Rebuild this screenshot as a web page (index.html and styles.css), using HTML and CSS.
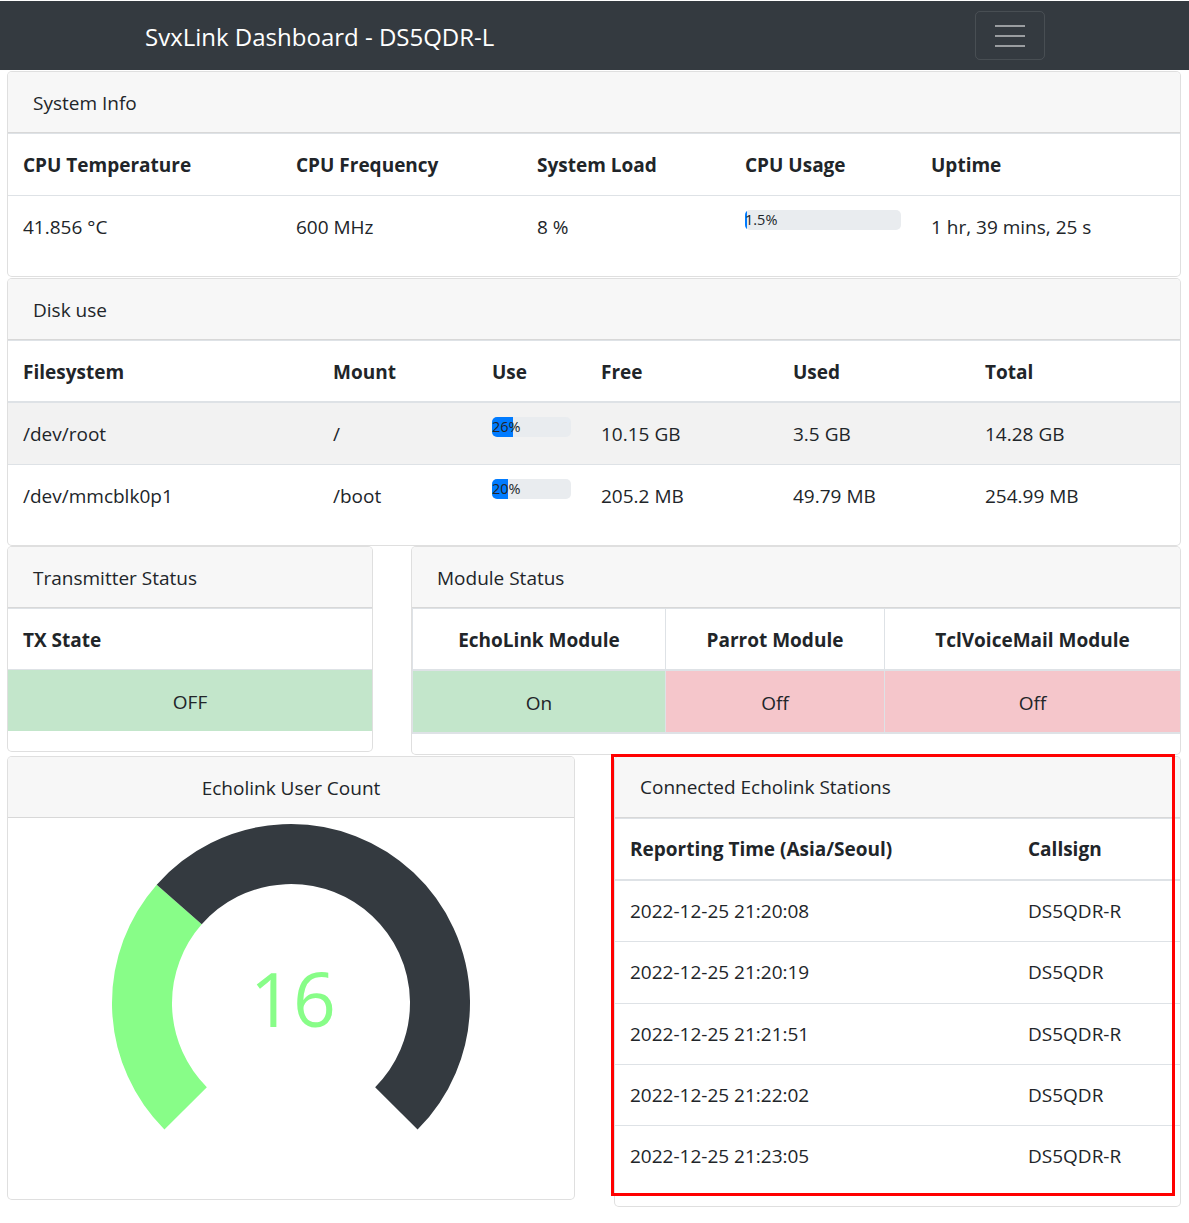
FILE: index.html
```html
<!DOCTYPE html>
<html lang="en">
<head>
<meta charset="utf-8">
<title>SvxLink Dashboard - DS5QDR-L</title>
<link rel="stylesheet" href="styles.css">
</head>
<body>
<nav class="navbar">
  <span class="brand">SvxLink Dashboard - DS5QDR-L</span>
  <button class="toggler" type="button" aria-label="Toggle navigation">
    <span class="bar"></span><span class="bar"></span><span class="bar"></span>
  </button>
</nav>

<main class="page">
  <section class="card">
    <div class="card-header">System Info</div>
    <table class="table sys">
      <tr>
        <th>CPU Temperature</th><th>CPU Frequency</th><th>System Load</th><th>CPU Usage</th><th>Uptime</th>
      </tr>
      <tr>
        <td>41.856 °C</td><td>600 MHz</td><td>8 %</td>
        <td><div class="progress"><div class="progress-bar" style="width:1.5%"></div><span class="progress-label">1.5%</span></div></td>
        <td>1 hr, 39 mins, 25 s</td>
      </tr>
    </table>
  </section>

  <section class="card">
    <div class="card-header">Disk use</div>
    <table class="table disk">
      <thead>
        <tr><th>Filesystem</th><th>Mount</th><th>Use</th><th>Free</th><th>Used</th><th>Total</th></tr>
      </thead>
      <tbody>
        <tr class="striped">
          <td>/dev/root</td><td>/</td>
          <td><div class="progress"><div class="progress-bar" style="width:26%"></div><span class="progress-label">26%</span></div></td>
          <td>10.15 GB</td><td>3.5 GB</td><td>14.28 GB</td>
        </tr>
        <tr>
          <td>/dev/mmcblk0p1</td><td>/boot</td>
          <td><div class="progress"><div class="progress-bar" style="width:20%"></div><span class="progress-label">20%</span></div></td>
          <td>205.2 MB</td><td>49.79 MB</td><td>254.99 MB</td>
        </tr>
      </tbody>
    </table>
  </section>

  <div class="row row-status">
    <section class="card tx-card">
      <div class="card-header">Transmitter Status</div>
      <table class="table tx">
        <tr><th>TX State</th></tr>
        <tr><td class="ok center">OFF</td></tr>
      </table>
    </section>
    <section class="card module-card">
      <div class="card-header">Module Status</div>
      <table class="table bordered modules">
        <thead>
          <tr><th>EchoLink Module</th><th>Parrot Module</th><th>TclVoiceMail Module</th></tr>
        </thead>
        <tbody>
          <tr><td class="ok">On</td><td class="bad">Off</td><td class="bad">Off</td></tr>
        </tbody>
      </table>
    </section>
  </div>

  <div class="row row-echo">
    <section class="card gauge-card">
      <div class="card-header center">Echolink User Count</div>
      <div class="gauge-body">
        <svg class="gauge" width="566" height="381" viewBox="0 0 566 381">
          <path d="M 177.64 290.36 A 149 149 0 0 1 171.23 86.47" fill="none" stroke="#88fd88" stroke-width="60"/>
          <path d="M 171.23 86.47 A 149 149 0 1 1 388.36 290.36" fill="none" stroke="#343a40" stroke-width="60"/>
          <text x="285" y="209" text-anchor="middle" class="gauge-value">16</text>
        </svg>
      </div>
    </section>
    <section class="card stations-card">
      <div class="card-header">Connected Echolink Stations</div>
      <table class="table stations">
        <thead>
          <tr><th>Reporting Time (Asia/Seoul)</th><th>Callsign</th></tr>
        </thead>
        <tbody>
          <tr><td>2022-12-25 21:20:08</td><td>DS5QDR-R</td></tr>
          <tr><td>2022-12-25 21:20:19</td><td>DS5QDR</td></tr>
          <tr><td>2022-12-25 21:21:51</td><td>DS5QDR-R</td></tr>
          <tr><td>2022-12-25 21:22:02</td><td>DS5QDR</td></tr>
          <tr><td>2022-12-25 21:23:05</td><td>DS5QDR-R</td></tr>
        </tbody>
      </table>
    </section>
  </div>
</main>

<div class="annotation"></div>
</body>
</html>
```

FILE: styles.css
```css
* { box-sizing: border-box; }

html, body { margin: 0; padding: 0; }

body {
  position: relative;
  font-family: "Open Sans", "Liberation Sans", sans-serif;
  font-size: 19px;
  color: #212529;
  background: #fff;
}

/* ---------- navbar ---------- */
.navbar {
  margin-top: 1px;
  height: 69px;
  background: #343a40;
  display: flex;
  align-items: center;
  justify-content: space-between;
  padding: 0 144px 0 145px;
}

.brand {
  color: #fff;
  font-size: 24px;
  line-height: 30px;
  padding-top: 2px;
}

.toggler {
  width: 70px;
  height: 49px;
  padding: 0;
  background: transparent;
  border: 1px solid rgba(255, 255, 255, 0.1);
  border-radius: 5px;
  display: flex;
  flex-direction: column;
  align-items: center;
  justify-content: center;
  gap: 8px;
}

.toggler .bar {
  display: block;
  width: 30px;
  height: 2px;
  background: rgba(255, 255, 255, 0.5);
}

/* ---------- layout ---------- */
.page {
  padding: 0 8px 0 7px;
  margin-top: 1px;
}

.row {
  display: flex;
  align-items: flex-start;
  gap: 38px;
}

.row-echo { margin-top: 1px; }

.tx-card { width: 366px; }
.module-card { flex: 1; }
.gauge-card { width: 568px; }
.stations-card { flex: 1; margin-left: 1px; }

/* ---------- card ---------- */
.card {
  background: #fff;
  border: 1px solid rgba(0, 0, 0, 0.125);
  border-radius: 5px;
  overflow: hidden;
}

.page > .card + .card { margin-top: 1px; }

.card-header {
  padding: 16px 25px 14.25px;
  line-height: 30px;
  background: #f7f7f7;
  border-bottom: 1px solid rgba(0, 0, 0, 0.125);
}

.stations-card .card-header { padding-top: 15px; padding-bottom: 15.25px; }

.center { text-align: center; }

/* ---------- tables ---------- */
.table {
  width: 100%;
  border-collapse: collapse;
  table-layout: fixed;
  margin-bottom: 20px;
}

.table th,
.table td {
  padding: 16px 15px 14.25px;
  line-height: 30px;
  text-align: left;
  vertical-align: top;
  border-top: 1px solid #dee2e6;
  font-weight: 400;
}

.table th { font-weight: 700; }

.table thead th { border-bottom: 2px solid #dee2e6; }

.striped td { background: #f2f2f2; }

.sys th:nth-child(1) { width: 273px; }
.sys th:nth-child(2) { width: 241px; }
.sys th:nth-child(3) { width: 208px; }
.sys th:nth-child(4) { width: 186px; }

.disk th:nth-child(1) { width: 310px; }
.disk th:nth-child(2) { width: 159px; }
.disk th:nth-child(3) { width: 109px; }
.disk th:nth-child(4) { width: 192px; }
.disk th:nth-child(5) { width: 192px; }

.bordered th,
.bordered td {
  border: 1px solid #dee2e6;
  text-align: center;
}

.bordered thead th { border-bottom-width: 2px; }
.bordered tbody td { border-bottom-width: 2px; }

.modules th:nth-child(1) { width: 253px; border-left: 1px solid #dee2e6; }
.modules th:nth-child(2) { width: 219px; }
.modules th:last-child, .modules td:last-child { border-right: 0; }

.tx td.center { text-align: center; padding-top: 17px; padding-bottom: 13.25px; }

.ok { background: #c3e6cb; }
.bad { background: #f5c6cb; }

.modules td { padding-top: 17px; padding-bottom: 13.25px; }

.stations th:nth-child(1) { width: 398px; }
.stations th, .stations td { padding-top: 15px; padding-bottom: 15.25px; }

/* ---------- progress ---------- */
.progress {
  position: relative;
  display: flex;
  height: 20px;
  background: #e9ecef;
  border-radius: 5px;
  overflow: hidden;
  margin-top: -2px;
}

.progress-bar {
  height: 100%;
  background: #007bff;
}

.progress-label {
  position: absolute;
  left: 0;
  top: 0;
  font-size: 14.5px;
  line-height: 20px;
  color: #212529;
}

/* ---------- gauge ---------- */
.gauge-body { height: 381px; }

.gauge { display: block; }

.gauge-value {
  font-family: "Open Sans", "Liberation Sans", sans-serif;
  font-size: 75px;
  fill: #88fd88;
}

/* ---------- annotation ---------- */
.annotation {
  position: absolute;
  left: 611px;
  top: 754px;
  width: 564px;
  height: 442px;
  border: 3px solid #ff0000;
  pointer-events: none;
}
```
